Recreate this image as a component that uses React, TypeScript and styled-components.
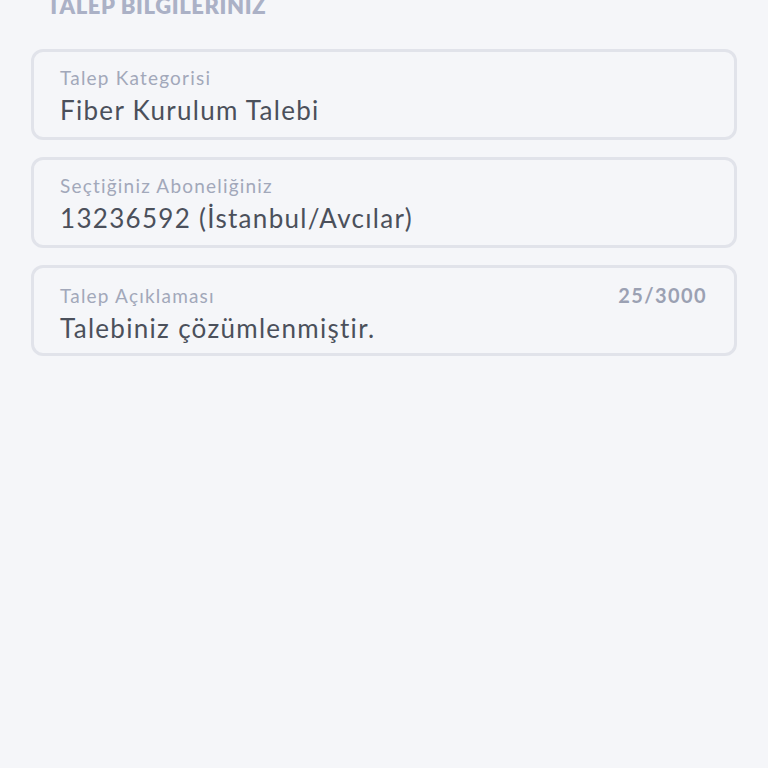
import React from 'react';
import styled, { createGlobalStyle } from 'styled-components';

const GlobalStyle = createGlobalStyle`
    html, body {
        margin: 0;
        padding: 0;
        background: #f5f6f9;
        font-family: Lato, "Noto Sans", sans-serif;
    }
`;

const Page = styled.div`
    width: 768px;
    height: 768px;
    overflow: hidden;
    background: #f5f6f9;
    box-sizing: border-box;
    padding: 0 31px;
`;

const SectionTitle = styled.h2`
    margin: -6px 0 0 16px;
    font-size: 22px;
    line-height: 24px;
    font-weight: 800;
    color: #abb1c6;
    letter-spacing: 0.6px;
`;

const FieldList = styled.div`
    display: flex;
    flex-direction: column;
    gap: 17px;
    margin-top: 31px;
`;

const Field = styled.div`
    height: 91px;
    box-sizing: border-box;
    border: 3px solid #e1e3ea;
    border-radius: 12px;
    background: #f5f6f9;
    padding: 15px 27px 0 26px;
`;

const LabelRow = styled.div`
    display: flex;
    justify-content: space-between;
    align-items: baseline;
`;

const Label = styled.span`
    font-size: 19px;
    line-height: 22px;
    letter-spacing: 1.2px;
    color: #a2a8ba;
`;

const Counter = styled.span`
    font-size: 20px;
    font-weight: 700;
    letter-spacing: 1.4px;
    color: #9ba1b3;
`;

const Value = styled.div`
    margin-top: 6px;
    font-size: 26px;
    line-height: 30px;
    letter-spacing: 1.3px;
    color: #4b505b;
`;

type FieldData = { label: string; value: string; counter?: string };

const fields: FieldData[] = [
    { label: 'Talep Kategorisi', value: 'Fiber Kurulum Talebi' },
    { label: 'Seçtiğiniz Aboneliğiniz', value: '13236592 (İstanbul/Avcılar)' },
    { label: 'Talep Açıklaması', value: 'Talebiniz çözümlenmiştir.', counter: '25/3000' }
];

export default function App() {
    return (
        <>
            <GlobalStyle />
            <Page>
                <SectionTitle>TALEP BILGILERINIZ</SectionTitle>
                <FieldList>
                    {fields.map((f) => (
                        <Field key={f.label}>
                            <LabelRow>
                                <Label>{f.label}</Label>
                                {f.counter && <Counter>{f.counter}</Counter>}
                            </LabelRow>
                            <Value>{f.value}</Value>
                        </Field>
                    ))}
                </FieldList>
            </Page>
        </>
    );
}
